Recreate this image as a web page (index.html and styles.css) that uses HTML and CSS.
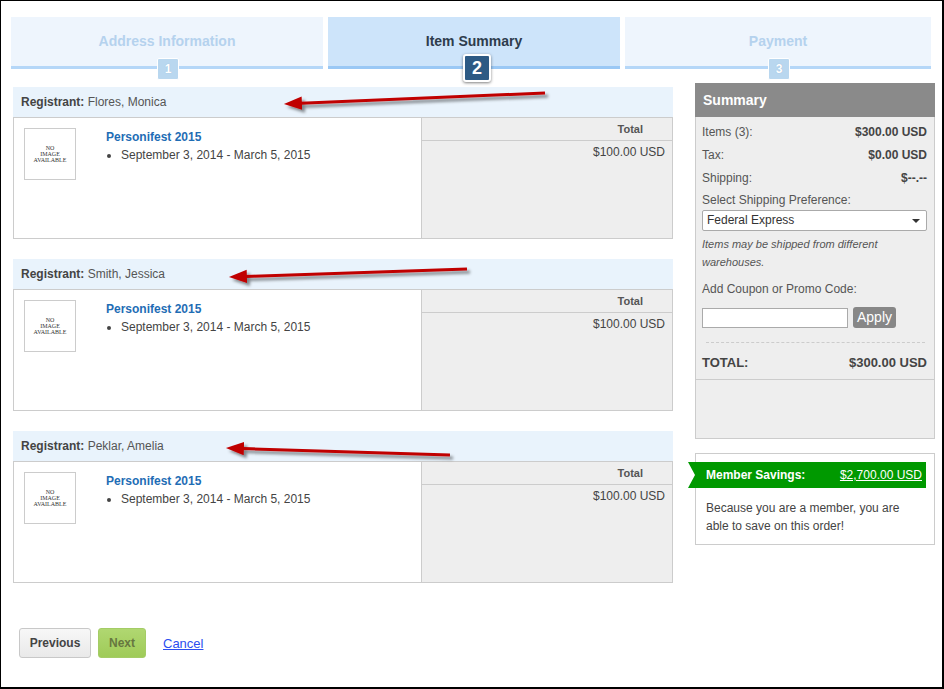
FILE: index.html
```html
<!DOCTYPE html>
<html>
<head>
<meta charset="utf-8">
<link rel="stylesheet" href="styles.css">
</head>
<body>
<div class="frame">
  <div class="tabs">
    <div class="tab"><span class="tab-title">Address Information</span><span class="badge">1</span></div>
    <div class="tab active"><span class="tab-title">Item Summary</span><span class="badge">2</span></div>
    <div class="tab"><span class="tab-title">Payment</span><span class="badge">3</span></div>
  </div>

  <div class="main">
    <div class="left">
      <div class="reg">
        <div class="reg-bar"><b>Registrant:</b> Flores, Monica</div>
        <div class="item">
          <div class="item-info">
            <div class="noimg">NO<br>IMAGE<br>AVAILABLE</div>
            <div class="details">
              <div class="title">Personifest 2015</div>
              <ul><li>September 3, 2014 - March 5, 2015</li></ul>
            </div>
          </div>
          <div class="item-total">
            <div class="total-head">Total</div>
            <div class="price">$100.00 USD</div>
          </div>
        </div>
      </div>
      <div class="reg">
        <div class="reg-bar"><b>Registrant:</b> Smith, Jessica</div>
        <div class="item">
          <div class="item-info">
            <div class="noimg">NO<br>IMAGE<br>AVAILABLE</div>
            <div class="details">
              <div class="title">Personifest 2015</div>
              <ul><li>September 3, 2014 - March 5, 2015</li></ul>
            </div>
          </div>
          <div class="item-total">
            <div class="total-head">Total</div>
            <div class="price">$100.00 USD</div>
          </div>
        </div>
      </div>
      <div class="reg">
        <div class="reg-bar"><b>Registrant:</b> Peklar, Amelia</div>
        <div class="item">
          <div class="item-info">
            <div class="noimg">NO<br>IMAGE<br>AVAILABLE</div>
            <div class="details">
              <div class="title">Personifest 2015</div>
              <ul><li>September 3, 2014 - March 5, 2015</li></ul>
            </div>
          </div>
          <div class="item-total">
            <div class="total-head">Total</div>
            <div class="price">$100.00 USD</div>
          </div>
        </div>
      </div>

      <div class="actions">
        <button class="btn btn-prev">Previous</button>
        <button class="btn btn-next">Next</button>
        <a class="cancel" href="#">Cancel</a>
      </div>
    </div>

    <div class="right">
      <div class="summary">
        <div class="sum-head">Summary</div>
        <div class="sum-body">
          <div class="row"><span>Items (3):</span><b>$300.00 USD</b></div>
          <div class="row"><span>Tax:</span><b>$0.00 USD</b></div>
          <div class="row"><span>Shipping:</span><b>$--.--</b></div>
          <div class="label">Select Shipping Preference:</div>
          <div class="select">Federal Express<span class="caret"></span></div>
          <div class="note">Items may be shipped from different warehouses.</div>
          <div class="label coupon-label">Add Coupon or Promo Code:</div>
          <div class="coupon">
            <div class="input"></div>
            <button class="apply">Apply</button>
          </div>
          <div class="dash"></div>
          <div class="total-row"><span>TOTAL:</span><span>$300.00 USD</span></div>
        </div>
        <div class="sum-foot"></div>
      </div>

      <div class="savings">
        <div class="ribbon"><span>Member Savings:</span><a href="#">$2,700.00 USD</a></div>
        <p>Because you are a member, you are able to save on this order!</p>
      </div>
    </div>
  </div>

  <svg class="arrows" width="944" height="689" viewBox="0 0 944 689">
    <defs>
      <filter id="sh" x="-10%" y="-200%" width="120%" height="500%">
        <feDropShadow dx="3" dy="3" stdDeviation="1.6" flood-color="#000" flood-opacity="0.45"/>
      </filter>
      <marker id="ah" markerWidth="6.2" markerHeight="4.6" refX="0.3" refY="2.2" orient="auto" markerUnits="strokeWidth">
        <polygon points="0,0 6,2.2 0,4.4" fill="#c00000"/>
      </marker>
    </defs>
    <g filter="url(#sh)" stroke="#c00000" stroke-width="3" fill="none">
      <line x1="545" y1="93" x2="301" y2="103.2" marker-end="url(#ah)"/>
      <line x1="467" y1="269" x2="246" y2="276.4" marker-end="url(#ah)"/>
      <line x1="450" y1="455" x2="243" y2="448.6" marker-end="url(#ah)"/>
    </g>
  </svg>
</div>
</body>
</html>
```
FILE: styles.css
```css
* { box-sizing: border-box; }
html, body { margin: 0; padding: 0; background: #fff; }
body {
  font-family: "Liberation Sans", Arial, sans-serif;
  font-size: 12px;
  color: #444;
}
.frame {
  position: relative;
  width: 944px;
  height: 689px;
  border-style: solid;
  border-color: #000;
  border-width: 1px 2px 2px 1px;
  padding: 16px 7px 0 10px;
  overflow: hidden;
}

/* tabs */
.tabs {
  display: grid;
  grid-template-columns: 312px 292px 306px;
  column-gap: 5px;
}
.tab {
  position: relative;
  height: 52px;
  background: #eef5fd;
  border-bottom: 3px solid #b5d7f8;
  text-align: center;
  padding-top: 16px;
}
.tab-title {
  font-size: 14px;
  font-weight: bold;
  color: #b5d2ee;
  line-height: 17px;
}
.badge {
  position: absolute;
  left: 50%;
  top: 41px;
  width: 22px;
  height: 22px;
  margin-left: -10px;
  background: #b9d7ef;
  border: 1px solid #fff;
  border-radius: 2px;
  color: #fff;
  font-weight: bold;
  font-size: 12px;
  line-height: 20px;
  text-align: center;
  text-shadow: 0 0 1px #8fb3d2;
}
.tab.active {
  background: #cde4fa;
  border-bottom-color: #9ac8f5;
}
.tab.active .tab-title { color: #2d3c4c; }
.tab.active .badge {
  top: 37px;
  width: 28px;
  height: 28px;
  margin-left: -11px;
  background: #2d5a84;
  border: 2px solid #fff;
  border-radius: 3px;
  font-size: 18px;
  line-height: 24px;
  text-shadow: none;
  box-shadow: 0 1px 3px rgba(0,0,0,0.5);
}

/* main layout */
.main {
  display: flex;
  column-gap: 22px;
  margin-top: 14px;
  margin-left: 2px;
}
.left {
  width: 660px;
  padding-top: 4px;
}
.reg + .reg { margin-top: 20px; }
.reg-bar {
  height: 30px;
  line-height: 30px;
  background: #e9f3fc;
  padding-left: 8px;
  color: #555;
}
.reg-bar b { color: #444; }
.item {
  display: grid;
  grid-template-columns: 407px 1fr;
  height: 122px;
  border: 1px solid #ccc;
}
.item-info {
  display: flex;
  align-items: flex-start;
  padding: 10px 0 0 10px;
  background: #fff;
}
.noimg {
  width: 52px;
  height: 52px;
  border: 1px solid #ccc;
  display: flex;
  align-items: center;
  justify-content: center;
  text-align: center;
  font-family: "Liberation Serif", serif;
  font-size: 6px;
  line-height: 6px;
  color: #333;
}
.details {
  margin-left: 30px;
  padding-top: 1px;
}
.title {
  font-weight: bold;
  color: #1f6db5;
  line-height: 16px;
}
.details ul {
  margin: 3px 0 0;
  padding-left: 15px;
  line-height: 15px;
  color: #444;
}
.item-total {
  background: #eee;
  border-left: 1px solid #ccc;
  text-align: right;
}
.total-head {
  height: 23px;
  line-height: 22px;
  border-bottom: 1px solid #ccc;
  font-size: 11px;
  font-weight: bold;
  color: #555;
  padding-right: 29px;
}
.price {
  padding: 4px 7px 0 0;
  line-height: 15px;
}

/* actions */
.actions {
  display: flex;
  align-items: center;
  margin-top: 45px;
  padding-left: 6px;
}
.btn {
  height: 30px;
  border-radius: 3px;
  font-family: "Liberation Sans", Arial, sans-serif;
  font-size: 12px;
  font-weight: bold;
  padding: 0;
  cursor: pointer;
}
.btn-prev {
  width: 72px;
  background: linear-gradient(#f7f7f7, #e9e9e9);
  border: 1px solid #c8c8c8;
  color: #444;
}
.btn-next {
  width: 48px;
  margin-left: 7px;
  background: linear-gradient(#b0d771, #9fcb58);
  border: 1px solid #a4cc66;
  color: #66773f;
}
.cancel {
  margin-left: 17px;
  color: #2c4ef0;
  font-size: 13px;
  text-decoration: underline;
}

/* summary */
.right { width: 240px; }
.summary {
  border: 1px solid #ccc;
  background: #eee;
}
.sum-head {
  height: 34px;
  margin: -1px -1px 0;
  background: #8a8a8a;
  color: #fff;
  font-size: 14px;
  font-weight: bold;
  line-height: 34px;
  padding-left: 8px;
}
.sum-body {
  padding: 4px 7px 6px 6px;
  border-bottom: 1px solid #ccc;
  color: #555;
}
.row {
  display: flex;
  justify-content: space-between;
  height: 23px;
  line-height: 23px;
}
.row b { color: #444; }
.label { line-height: 20px; }
.select {
  position: relative;
  height: 21px;
  background: #fff;
  border: 1px solid #aaa;
  border-radius: 2px;
  padding-left: 4px;
  line-height: 19px;
  color: #333;
}
.caret {
  position: absolute;
  right: 6px;
  top: 8px;
  border-left: 4px solid transparent;
  border-right: 4px solid transparent;
  border-top: 4px solid #333;
}
.note {
  margin-top: 4px;
  font-size: 11px;
  font-style: italic;
  line-height: 18px;
  color: #555;
}
.coupon-label {
  margin-top: 9px;
  line-height: 18px;
}
.coupon {
  display: flex;
  align-items: center;
  margin-top: 9px;
}
.input {
  width: 146px;
  height: 20px;
  background: #fff;
  border: 1px solid #aaa;
}
.apply {
  margin-left: 5px;
  width: 43px;
  height: 21px;
  padding: 0;
  border: 0;
  border-radius: 3px;
  background: #878787;
  color: #fff;
  font-family: "Liberation Sans", Arial, sans-serif;
  font-size: 14px;
  line-height: 21px;
}
.dash {
  margin: 14px 2px 0 4px;
  border-top: 1px dashed #ccc;
}
.total-row {
  display: flex;
  justify-content: space-between;
  margin-top: 10px;
  line-height: 20px;
  font-size: 13px;
  font-weight: bold;
  color: #444;
}
.sum-foot { height: 58px; }

/* savings */
.savings {
  margin-top: 14px;
  height: 92px;
  border: 1px solid #ccc;
  background: #fff;
}
.ribbon {
  display: flex;
  justify-content: space-between;
  align-items: center;
  margin: 8px 0 0 -8px;
  width: 238px;
  height: 26px;
  background: #009900;
  padding: 0 4px 0 18px;
  color: #fff;
  font-weight: bold;
  clip-path: polygon(0 0, 100% 0, 100% 100%, 0 100%, 7px 50%);
}
.ribbon a {
  color: #fff;
  font-weight: normal;
  text-decoration: underline;
}
.savings p {
  margin: 11px 0 0;
  padding: 0 10px;
  line-height: 18px;
  color: #444;
}

/* annotation arrows */
.arrows {
  position: absolute;
  left: -1px;
  top: -1px;
  pointer-events: none;
}
```
